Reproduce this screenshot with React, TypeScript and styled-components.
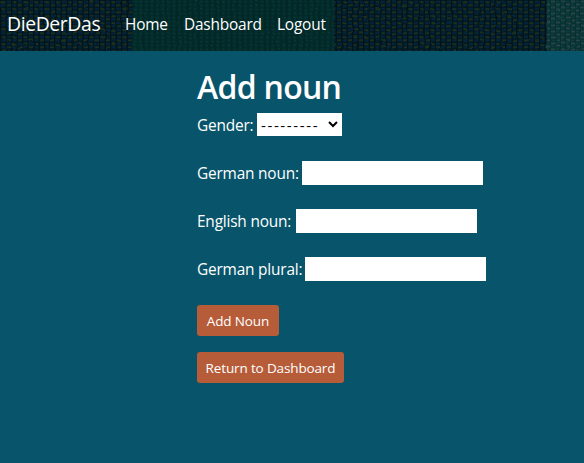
import React from "react";
import styled, { createGlobalStyle } from "styled-components";

const Global = createGlobalStyle`
  *, *::before, *::after { box-sizing: border-box; }
  html, body { margin: 0; min-height: 100vh; background: #07546b; }
  body {
    font: 15.4px/24px "Open Sans", "Noto Sans", sans-serif;
    letter-spacing: -0.18px;
    color: #fff;
    overflow: hidden;
  }
`;

const Bar = styled.header`
  display: grid;
  height: 51px;
  overflow: hidden;
  & > * { grid-area: 1 / 1; }
`;
const Fabric = styled.svg`
  display: block;
  width: 584px;
  height: 51px;
`;
const Nav = styled.nav`
  display: flex;
  align-items: center;
  height: 48px;
  padding-left: 7px;
  z-index: 1;
`;
const Brand = styled.a`
  width: 118px;
  font-size: 19.4px;
  letter-spacing: -0.4px;
  white-space: nowrap;
`;
const NavLink = styled.a<{ $w: number }>`
  width: ${p => p.$w}px;
  padding-top: 1px;
  white-space: nowrap;
`;
const Main = styled.main`
  padding: 17px 0 0 197px;
`;
const Title = styled.h1`
  margin: 0 0 7px;
  font-size: 32px;
  line-height: 38px;
  font-weight: 600;
  letter-spacing: -0.7px;
`;
const Field = styled.div`
  display: flex;
  align-items: center;
  height: 24px;
  margin-bottom: 24px;
`;
const Label = styled.label<{ $w: number }>`
  flex: none;
  width: ${p => p.$w}px;
  padding-top: 2px;
  white-space: nowrap;
`;
const Input = styled.input`
  width: 181px;
  height: 24px;
  padding: 1px 2px;
  border: 0;
  border-radius: 0;
  background: #fff;
`;
const Picker = styled.div`
  display: flex;
  align-self: flex-start;
  align-items: center;
  justify-content: space-between;
  width: 85px;
  height: 23px;
  padding: 0 4px;
  background: #fff;
  color: #000;
  font-size: 15.1px;
  line-height: 23px;
  letter-spacing: 1.6px;
`;
const Dashes = styled.span`
  padding-top: 2px;
`;
const Actions = styled.div`
  display: flex;
  flex-direction: column;
  align-items: flex-start;
  gap: 16px;
`;
const Button = styled.button<{ $w: number }>`
  width: ${p => p.$w}px;
  height: 31px;
  padding: 1px 0 0;
  border: 0;
  border-radius: 3px;
  background: #b65c39;
  color: #fff;
  font: 13.5px/30px "Open Sans", "Noto Sans", sans-serif;
  letter-spacing: -0.14px;
  white-space: nowrap;
`;

const Knit = () => (
  <Fabric viewBox="0 0 584 51" aria-hidden="true">
    <defs>
      <pattern id="weave" width="11" height="7" patternUnits="userSpaceOnUse">
        <rect width="11" height="7" fill="#021820" />
        <path d="M.5 0v7M6 0v7" stroke="#02121a" strokeWidth="1" />
        <path d="M1.5 2l4 .5M7 5.5l4-.3" stroke="#1b301f" strokeWidth="1.8" />
        <path d="M1.5 5.3h4M7 2h4" stroke="#03233a" strokeWidth="2.4" />
      </pattern>
      <pattern id="rib" width="5.5" height="4" patternUnits="userSpaceOnUse">
        <rect width="5.5" height="4" fill="#022c2b" />
        <path d="M.8 0v4" stroke="#022220" />
        <path d="M2 1l2.5 1" stroke="#073835" />
      </pattern>
      <pattern id="mist" width="10" height="6" patternUnits="userSpaceOnUse">
        <rect width="10" height="6" fill="#07302f" />
        <path d="M1 1.5h4M6 4.5h4" stroke="#25444a" strokeWidth="2" />
        <path d="M1 4.5h3M6 1.5h3" stroke="#0a3f3e" strokeWidth="1.5" />
      </pattern>
      <filter id="yarn" x="0" y="0" width="1" height="1" colorInterpolationFilters="sRGB">
        <feTurbulence type="fractalNoise" baseFrequency="0.08" numOctaves="2" seed="4" />
        <feDisplacementMap in="SourceGraphic" scale="3" xChannelSelector="R" yChannelSelector="G" />
      </filter>
    </defs>
    <rect width="584" height="51" fill="#021922" />
    <g filter="url(#yarn)">
      <rect x="-6" y="-6" width="596" height="63" fill="url(#weave)" />
      <rect x="132" y="-6" width="202" height="63" fill="url(#rib)" />
      <rect x="547" y="-6" width="43" height="63" fill="url(#mist)" />
    </g>
  </Fabric>
);

export default function App() {
  return (
    <>
      <Global />
      <Bar>
        <Knit />
        <Nav>
          <Brand>DieDerDas</Brand>
          <NavLink $w={59}>Home</NavLink>
          <NavLink $w={93}>Dashboard</NavLink>
          <NavLink $w={60}>Logout</NavLink>
        </Nav>
      </Bar>
      <Main>
        <Title>Add noun</Title>
        <Field>
          <Label $w={60}>Gender:</Label>
          <Picker role="combobox" aria-label="Gender">
            <Dashes>---------</Dashes>
            <svg width="10" height="7" viewBox="0 0 10 7" fill="none">
              <path d="M1 1l4 4 4-4" stroke="#000" strokeWidth="2" />
            </svg>
          </Picker>
        </Field>
        <Field><Label $w={105}>German noun:</Label><Input /></Field>
        <Field><Label $w={99}>English noun:</Label><Input /></Field>
        <Field><Label $w={108}>German plural:</Label><Input /></Field>
        <Actions>
          <Button $w={82}>Add Noun</Button>
          <Button $w={147}>Return to Dashboard</Button>
        </Actions>
      </Main>
    </>
  );
}
